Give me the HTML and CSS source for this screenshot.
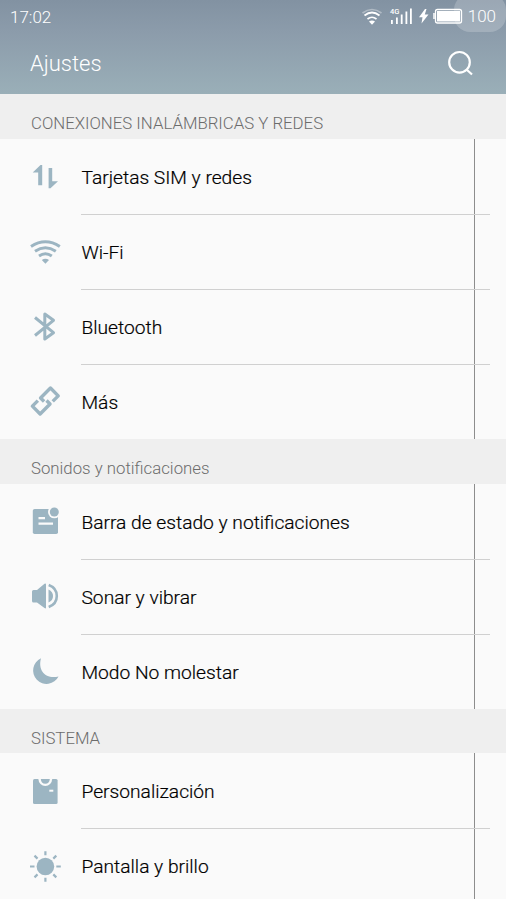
FILE: index.html
```html
<!DOCTYPE html>
<html lang="es">
<head>
<meta charset="utf-8">
<title>Ajustes</title>
<link rel="stylesheet" href="styles.css">
</head>
<body>
<header class="top">
  <div class="status">
    <span class="time">17:02</span>
    <svg class="indicators" width="106" height="32" viewBox="360 0 106 32">
      <g fill="none" stroke="#fff" stroke-width="1.7">
        <path d="M362.5 13Q372 6 381.500 13" opacity=".35"/>
        <path d="M364.500 15.500Q372 9.500 379.500 15.500"/>
        <path d="M367.500 19Q372 15.500 376.500 19"/>
      </g>
      <path d="M369 21.500Q372 19.500 375 21.500L372 24.700Z" fill="#fff"/>
      <text x="390" y="13.500" class="net">4G</text>
      <path d="M391 20h1.800v4h-1.800zM396 17.500h1.800v6.500h-1.800zM400.800 14.500h1.800v9.500h-1.800zM405.500 11.500h1.800v12.500h-1.800zM410 8.500h1.800v15.500h-1.800z" fill="#fff"/>
      <path d="M425 9L419 17.200H422.500L421.500 23.500L428.500 14.500H424.800L426.500 9Z" fill="#fff"/>
      <rect x="435.500" y="9.500" width="26" height="13.500" rx="2" fill="none" stroke="#fff" stroke-width="1.300"/>
      <rect x="437" y="11" width="23" height="10.500" fill="#fff"/>
      <path d="M434 13v6" stroke="#fff" stroke-width="1.500"/>
    </svg>
    <span class="charge">100</span>
    <i class="touch"></i>
  </div>
  <div class="bar">
    <h1>Ajustes</h1>
    <svg width="30" height="30" viewBox="445 48 30 30" fill="none" stroke="#fff" stroke-width="2.200"><circle cx="459.500" cy="62.300" r="10.300"/><path d="M466.500 69.500L472 74.500"/></svg>
  </div>
</header>
<main>
  <section>
    <h2>CONEXIONES INALÁMBRICAS Y REDES</h2>
    <ul>
      <li><svg class="icon" viewBox="20 0 61 75"><path d="M32.700 33.500L40.500 26H42.200V46.300H38.200V33.500ZM48.600 29H52.200V42.300H58L50.500 49.300H48.600Z"/></svg><span>Tarjetas SIM y redes</span></li>
      <li><svg class="icon" viewBox="20 0 61 75"><g class="line"><path d="M31 32.500Q45.400 23 59.800 32.500M35 37.200Q45.400 30.500 55.800 37.200M39 42Q45.400 37.500 51.800 42"/></g><path d="M41.800 46Q45.400 43.400 49 46L45.400 49.800Z"/></svg><span>Wi-Fi</span></li>
      <li><svg class="icon" viewBox="20 0 61 75"><path class="line" d="M35 28.500L53.500 43.700L44.800 50V25L53.500 31.300L35 46.500"/></svg><span>Bluetooth</span></li>
      <li><svg class="icon" viewBox="20 0 61 75"><g class="line link" transform="rotate(-45 45.300 37)"><path d="M40.300 31.500H32.500V42.500H46.500V37.500M50.300 42.500H58.100V31.500H44.100V36.500"/></g></svg><span>Más</span></li>
    </ul>
  </section>
  <section>
    <h2>Sonidos y notificaciones</h2>
    <ul>
      <li><svg class="icon" viewBox="20 0 61 75"><rect x="32.800" y="25" width="25.200" height="25" rx="1.800"/><circle class="cut" cx="54.300" cy="28" r="6.300"/><circle cx="54.300" cy="28" r="4.500"/><path class="cut" d="M38.500 33h6.500v2.300h-6.500zM38.500 38.500h14.500v2.300h-14.500z"/></svg><span>Barra de estado y notificaciones</span></li>
      <li><svg class="icon" viewBox="20 0 61 75"><path d="M33.500 31H37L44.500 24.800Q46 24 46 25.500V48.500Q46 50 44.500 49L37 43.500H33.500Q32 43.500 32 42V32.500Q32 31 33.500 31Z"/><path d="M48.500 30.500Q53 32.500 53 37T48.500 43.500Z"/><path class="line wave" d="M48.700 26Q56.800 29 56.800 37T48.700 48"/></svg><span>Sonar y vibrar</span></li>
      <li><svg class="icon" viewBox="20 0 61 75"><path d="M41 24.300A13.400 13.400 0 1 0 58.500 42.500C46 45.500 37.500 37 41 24.300Z"/></svg><span>Modo No molestar</span></li>
    </ul>
  </section>
  <section class="system">
    <h2>SISTEMA</h2>
    <ul>
      <li><svg class="icon" viewBox="20 0 61 75"><rect x="33" y="26" width="24.600" height="25" rx="1.500"/><circle class="cut" cx="45.300" cy="26.200" r="6.800"/><path d="M40.800 26H49.800Q49.500 30.700 45.300 30.700T40.800 26Z"/><path class="cut" d="M49.300 36.700h4v2h-4z"/></svg><span>Personalización</span></li>
      <li><svg class="icon" viewBox="20 0 61 75"><circle cx="45.400" cy="38.500" r="8.800"/><path class="line ray" d="M45.400 23.200v4M45.400 49.800v4M30 38.500h4.500M56.300 38.500h4.500M34.500 27.600l3 3M53.300 46.400l3 3M56.300 27.600l-3 3M37.500 46.400l-3 3"/></svg><span>Pantalla y brillo</span></li>
    </ul>
  </section>
</main>
</body>
</html>
```

FILE: styles.css
```css
* { box-sizing: border-box; }
body { margin: 0; height: 899px; overflow: hidden; background: #fafafa; font-family: Roboto, sans-serif; font-weight: 300; }
h1, h2, ul { margin: 0; padding: 0; font-weight: 300; }
.top { height: 94px; color: #fff; background: linear-gradient(#8292a2, #8c9cab 35%, #9aafb8); }
.status { position: relative; display: flex; align-items: center; height: 32px; padding: 0 10px; font-size: 17px; }
.time { flex: 1; padding-top: 2px; }
.indicators { margin-right: 2px; }
.net { font-size: 7.5px; font-weight: 500; fill: #fff; }
.touch { position: absolute; right: 0; top: -6px; width: 52px; height: 38px; border-radius: 16px; background: #ffffff33; }
.bar { display: flex; align-items: center; justify-content: space-between; height: 62px; padding: 0 31px 0 30px; }
h1 { font-size: 22px; padding-top: 1px; }
h2 { height: 45px; padding: 14px 0 0 31px; background: #efefef; color: #6c6c6c; font-size: 16.8px; line-height: 31px; }
.system h2 { height: 44px; }
ul { list-style: none; background: linear-gradient(#8d8d8d, #8d8d8d) 474px 0 / 1px 100% no-repeat; }
li { display: flex; align-items: center; height: 75px; padding-left: 20px; font-size: 19.2px; color: #000; -webkit-text-stroke: .2px #000; }
li span { flex: 1; height: 75px; margin-right: 16px; padding-left: .5px; line-height: 77px; box-shadow: 0 1px #d0d0d0; }
li:last-child span { box-shadow: none; }
.icon { width: 61px; height: 75px; flex: none; fill: #9cb5c2; }
.line { fill: none; stroke: #9cb5c2; stroke-width: 3; stroke-linejoin: round; }
.link { stroke-width: 3.4; }
.wave { stroke-width: 2.6; }
.ray { stroke-width: 2.2; }
.cut { fill: #fafafa; }
```
